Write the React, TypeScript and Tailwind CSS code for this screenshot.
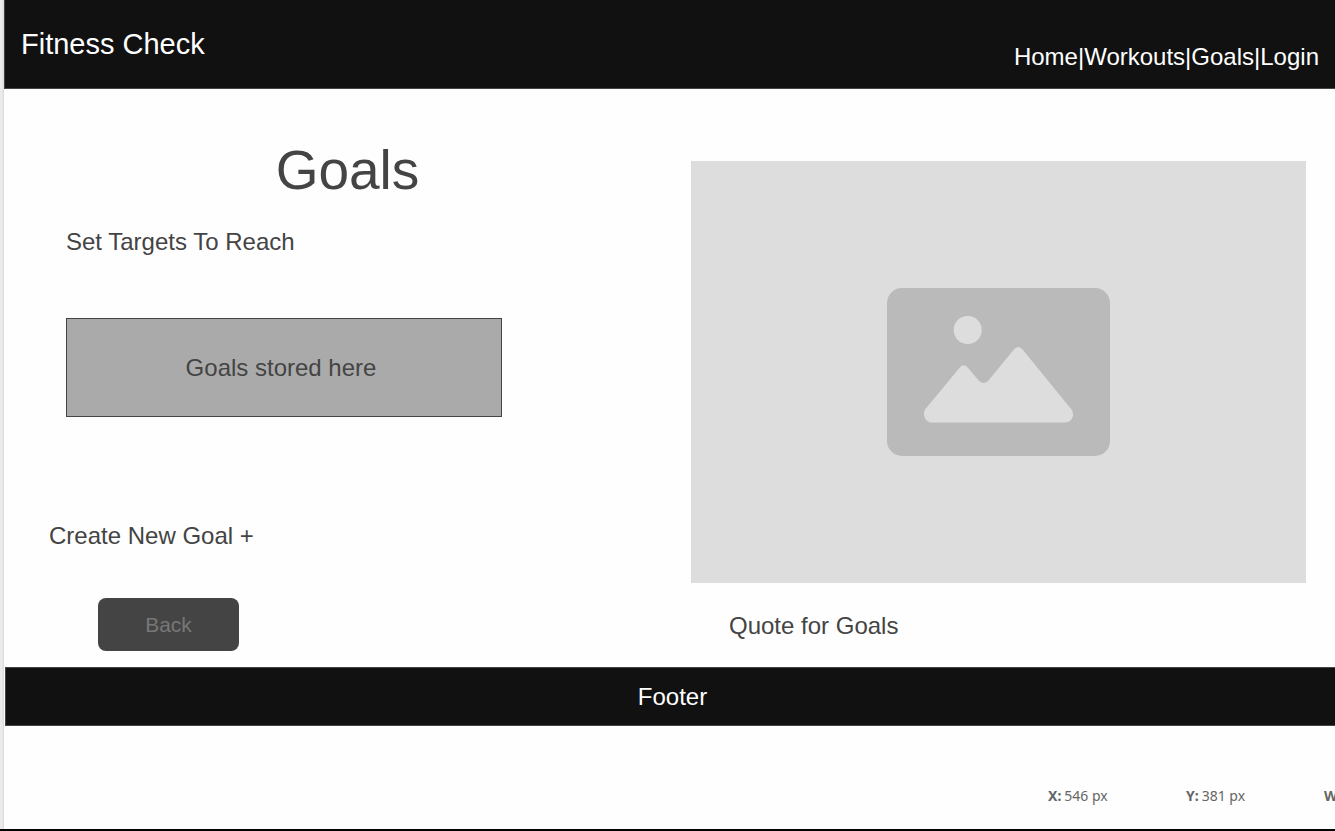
const links = ["Home", "Workouts", "Goals", "Login"];

function Header() {
  return (
    <header className="flex h-[89px] items-center justify-between border-b border-l border-[#444] bg-[#111] px-4 text-white">
      <p className="text-[29px] leading-8">Fitness Check</p>
      <nav aria-label="Main" className="flex pt-[26px] text-[24px] leading-8">
        {links.map((link, i) => (
          <span key={link}>
            {i > 0 && "|"}
            <a href={"#" + link.toLowerCase()}>{link}</a>
          </span>
        ))}
      </nav>
    </header>
  );
}

function GoalsPanel() {
  return (
    <section className="flex flex-col items-start">
      <h1 className="mt-[49px] w-full text-center text-[55px] leading-16">Goals</h1>
      <h2 className="mt-6 ml-[62px] text-[24px] leading-8">Set Targets To Reach</h2>
      <div className="mt-15 ml-[62px] flex h-[99px] w-[436px] items-center justify-center border border-[#444] bg-[#aaa] pr-1.5 text-[24px] leading-8">
        Goals stored here
      </div>
      <button type="button" className="mt-[103px] ml-[45px] text-[24px] leading-8">
        Create New Goal +
      </button>
      <button
        type="button"
        className="mt-[46px] ml-[94px] h-[53px] w-[141px] rounded-lg bg-[#444] text-[21px] leading-8 text-[#777]"
      >
        Back
      </button>
    </section>
  );
}

function QuotePanel() {
  return (
    <section className="pt-18 pr-[29px]">
      <div className="flex h-[422px] items-center justify-center bg-[#ddd]">
        <svg width="223" height="168" viewBox="0 0 223 168" role="img" aria-label="Image placeholder">
          <rect width="223" height="168" rx="15" fill="#bababa" />
          <circle cx="80.7" cy="42" r="14" fill="#ddd" />
          <path
            d="M38.8 120.5 L72 80.5 Q76.5 74 81.5 80.5 L92.2 93 Q96.4 97 101 93 L126.5 62 Q131 56 136 62 L184.5 121.5 C188.5 127 184.5 134.5 178.5 134.5 H45 C38.5 134.5 34.5 126.5 38.8 120.5 Z"
            fill="#ddd"
          />
        </svg>
      </div>
      <p className="mt-[27px] ml-[38px] text-[24px] leading-8">Quote for Goals</p>
    </section>
  );
}

function StatusBar() {
  return (
    <dl className="flex justify-end overflow-hidden pt-15 pb-4 font-['Noto_Sans',sans-serif] text-[14px] leading-5 text-[#666]">
      <div className="flex w-[138px] shrink-0 gap-[3px]">
        <dt className="font-bold">X:</dt>
        <dd>546 px</dd>
      </div>
      <div className="flex w-[138px] shrink-0 gap-[3px]">
        <dt className="font-bold">Y:</dt>
        <dd>381 px</dd>
      </div>
      <div className="w-[11px] shrink-0">
        <dt className="font-bold">W</dt>
      </div>
    </dl>
  );
}

export default function App() {
  return (
    <div className="flex min-h-screen flex-col overflow-hidden border-b-2 border-black bg-[#fefefe] font-['Liberation_Sans',Arial,sans-serif] text-[#444]">
      <div className="flex grow">
        <div className="w-1 shrink-0 bg-linear-to-r from-[#ebebeb] from-50% to-[#d8d8d8]" />
        <div className="flex min-w-0 grow flex-col">
          <Header />
          <main className="grid grid-cols-[687px_1fr] pb-4">
            <GoalsPanel />
            <QuotePanel />
          </main>
          <footer className="ml-px flex h-[59px] items-center justify-center border-y border-l border-[#444] bg-[#111] pl-1 text-[24px] leading-8 text-white">
            Footer
          </footer>
          <StatusBar />
        </div>
      </div>
    </div>
  );
}
